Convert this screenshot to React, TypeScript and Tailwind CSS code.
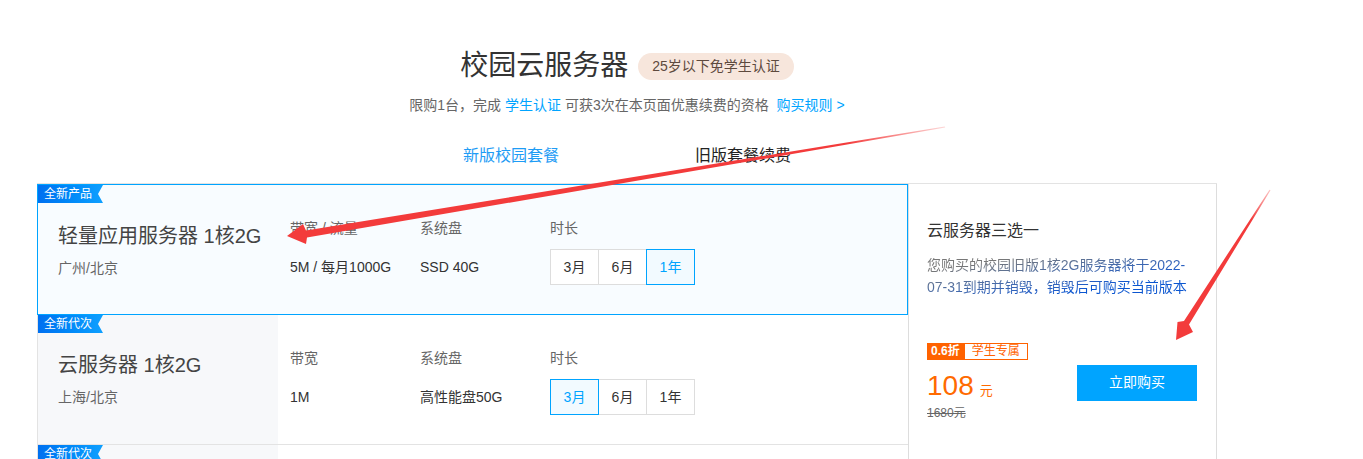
import React from 'react';

const font = "font-['Liberation_Sans','Noto_Sans_CJK_SC',sans-serif]";

type Plan = {
    tag: string;
    name: string;
    region: string;
    bwLabel: string;
    bw: string;
    disk: string;
    selected: number;
    active: boolean;
};

const plans: Plan[] = [
    { tag: '全新产品', name: '轻量应用服务器 1核2G', region: '广州/北京', bwLabel: '带宽 / 流量', bw: '5M / 每月1000G', disk: 'SSD 40G', selected: 2, active: true },
    { tag: '全新代次', name: '云服务器 1核2G', region: '上海/北京', bwLabel: '带宽', bw: '1M', disk: '高性能盘50G', selected: 0, active: false },
    { tag: '全新代次', name: '云服务器 2核4G', region: '上海/北京', bwLabel: '带宽', bw: '1M', disk: '高性能盘50G', selected: 0, active: false },
];

function Tag({ text }: { text: string }) {
    return (
        <div className="absolute left-0 top-0 h-[18px] w-[65px] pl-[6px] text-[12px] leading-[18px] text-white bg-gradient-to-r from-[#0070f0] to-[#10a0ff] [clip-path:polygon(0_0,100%_0,calc(100%-5px)_50%,100%_100%,0_100%)]">
            {text}
        </div>
    );
}

function Durations({ selected }: { selected: number }) {
    const items = ['3月', '6月', '1年'];
    return (
        <div className="flex">
            {items.map((d, i) => (
                <div
                    key={d}
                    className={
                        i === selected
                            ? 'relative z-10 -ml-px first:ml-0 w-[49px] h-[36px] flex items-center justify-center border border-[#00a4ff] bg-[#f2faff] text-[14px] text-[#00a4ff]'
                            : 'relative -ml-px first:ml-0 w-[49px] h-[36px] flex items-center justify-center border border-[#dddddd] bg-white text-[14px] text-[#333]'
                    }
                >
                    {d}
                </div>
            ))}
        </div>
    );
}

function PlanRow({ plan }: { plan: Plan }) {
    return (
        <div
            className={
                plan.active
                    ? 'relative flex h-[131px] border border-[#00a4ff] bg-[#f8fcff]'
                    : 'relative flex h-[130px] border-l border-b border-[#e3e3e3] bg-white'
            }
        >
            <Tag text={plan.tag} />
            {/* name + region */}
            <div className={plan.active ? 'w-[240px] pl-[20px] pt-[37px]' : 'w-[240px] pl-[20px] pt-[36px] bg-[#f7f8fa]'}>
                <div className="text-[20px] leading-[28px] text-[#444]">{plan.name}</div>
                <div className="mt-[8px] text-[14px] leading-[20px] text-[#666]">{plan.region}</div>
            </div>
            <div className="w-[130px] ml-[12px] pt-[33px]">
                <div className="text-[14px] leading-[20px] text-[#666]">{plan.bwLabel}</div>
                <div className="mt-[11px] h-[36px] flex items-center text-[14px] text-[#333]">{plan.bw}</div>
            </div>
            <div className="w-[130px] pt-[33px]">
                <div className="text-[14px] leading-[20px] text-[#666]">系统盘</div>
                <div className="mt-[11px] h-[36px] flex items-center text-[14px] text-[#333]">{plan.disk}</div>
            </div>
            <div className="pt-[33px]">
                <div className="text-[14px] leading-[20px] text-[#666]">时长</div>
                <div className="mt-[11px]">
                    <Durations selected={plan.selected} />
                </div>
            </div>
        </div>
    );
}

function Arrows() {
    return (
        <svg className="absolute left-0 top-0 pointer-events-none" width="1363" height="459" viewBox="0 0 1363 459">
            <defs>
                <linearGradient id="fade1" x1="945" y1="127" x2="287" y2="238" gradientUnits="userSpaceOnUse">
                    <stop offset="0" stopColor="#f33b3b" stopOpacity="0.2" />
                    <stop offset="0.15" stopColor="#f33b3b" stopOpacity="1" />
                    <stop offset="1" stopColor="#f33b3b" />
                </linearGradient>
                <linearGradient id="fade2" x1="1270" y1="190" x2="1177" y2="340" gradientUnits="userSpaceOnUse">
                    <stop offset="0" stopColor="#f33b3b" stopOpacity="0.3" />
                    <stop offset="0.2" stopColor="#f33b3b" stopOpacity="1" />
                    <stop offset="1" stopColor="#f33b3b" />
                </linearGradient>
            </defs>
            <polygon
                fill="url(#fade1)"
                points="287,236 306,244 307,237.5 945.2,127.6 944.8,126.4 306,230.5 303,224"
            />
            <polygon
                fill="url(#fade2)"
                points="1176,340 1193,332 1189,324.5 1270.5,190.3 1269.5,189.7 1184,321 1177.5,322"
            />
        </svg>
    );
}

export default function App() {
    return (
        <div className={`relative min-h-[459px] overflow-hidden bg-white ${font}`}>
            <div className="ml-[37px] w-[1180px]">
                {/* Header */}
                <div className="pt-[46px] flex items-center justify-center gap-[10px]">
                    <h1 className="text-[28px] leading-[40px] text-[#333]">校园云服务器</h1>
                    <span className="h-[27px] px-[14px] rounded-full bg-[#f7e6dc] text-[14px] leading-[27px] text-[#5e4a3e]">
                        25岁以下免学生认证
                    </span>
                </div>
                <p className="mt-[9px] text-center text-[14px] leading-[20px] text-[#666]">
                    限购1台，完成 <span className="text-[#00a4ff]">学生认证</span> 可获3次在本页面优惠续费的资格{' '}
                    <span className="ml-[4px] text-[#00a4ff]">购买规则 &gt;</span>
                </p>

                {/* Tabs */}
                <div className="mt-[29px] flex justify-center">
                    <div className="w-[232px] text-center text-[16px] leading-[24px] text-[#1e9cf5]">新版校园套餐</div>
                    <div className="w-[232px] text-center text-[16px] leading-[24px] text-[#222]">旧版套餐续费</div>
                </div>

                {/* Table */}
                <div className="mt-[15px] flex border-t border-[#e3e3e3]">
                    <div className="w-[871px]">
                        {plans.map((p, i) => (
                            <PlanRow key={i} plan={p} />
                        ))}
                    </div>
                    <div className="flex-1 border-x border-[#dddddd] pl-[18px] pr-[18px] pt-[35px]">
                        <div className="text-[16px] leading-[24px] text-[#333]">云服务器三选一</div>
                        <p className="mt-[11px] text-[14px] leading-[22px] whitespace-nowrap bg-gradient-to-br from-[#777777] from-20% to-[#0b56d0] to-70% bg-clip-text text-transparent">
                            您购买的校园旧版1核2G服务器将于2022-
                            <br />
                            07-31到期并销毁，销毁后可购买当前版本
                        </p>
                        <div className="mt-[45px] flex items-center justify-between">
                            <div>
                                <div className="flex h-[17px] text-[12px] leading-[15px]">
                                    <span className="px-[3px] bg-[#ff6200] border border-[#ff6200] text-white font-bold">0.6折</span>
                                    <span className="px-[7px] border border-[#ff6200] text-[#ff6200]">学生专属</span>
                                </div>
                                <div className="mt-[10px] flex items-baseline text-[#ff6a00]">
                                    <span className="text-[28px] leading-[32px]">108</span>
                                    <span className="ml-[6px] text-[13px]">元</span>
                                </div>
                                <div className="mt-[2px] text-[12px] leading-[18px] text-[#666] line-through">1680元</div>
                            </div>
                            <button className="w-[120px] h-[36px] mr-[1px] bg-[#00a4ff] text-[14px] text-white">立即购买</button>
                        </div>
                    </div>
                </div>
            </div>
            <Arrows />
        </div>
    );
}
